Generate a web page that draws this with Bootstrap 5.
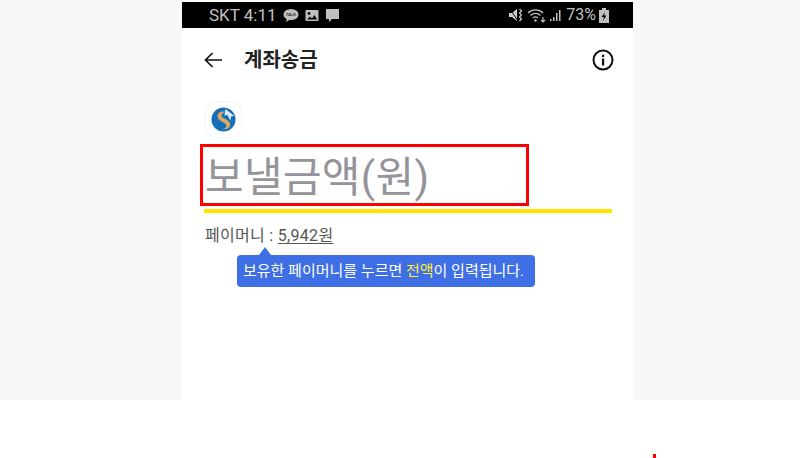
<!DOCTYPE html>
<html lang="ko">
<head>
    <meta charset="UTF-8">
    <meta name="viewport" content="width=device-width, initial-scale=1">
    <title>계좌송금</title>
    <link href="https://cdn.jsdelivr.net/npm/bootstrap@5.3.0/dist/css/bootstrap.min.css" rel="stylesheet">
    <style>
        html, body { height: 458px; overflow: hidden; }
        body { font-family: Roboto, "Noto Sans CJK KR", sans-serif; background: #fff; position: relative; }
        .stage { height: 400px; background: #f8f8f8; }
        .phone { width: 451px; margin-left: 182px; background: #fff; height: 400px; padding-top: 2px; }
        .status-bar { height: 26px; background: #000; color: #c0c0c0; font-size: 17px; line-height: 26px; padding: 0 24px 0 27px; }
        .status-left { gap: 6px; }
        .status-right { gap: 3px; }
        .battery-text { font-size: 16px; }
        .app-bar { height: 61px; padding: 2px 19px 0 22px; }
        .app-title { font-size: 20px; font-weight: 700; color: #222; margin-left: 22px; }
        .content-area { padding-left: 22px; padding-right: 21px; }
        .bank-logo { width: 37px; height: 37px; border: 1px solid #f4f4f4; border-radius: 12px; margin: 12px 0 0 1px; }
        .amount-box { width: 329px; height: 62px; border: 3px solid #f00; margin-left: -4px; margin-top: 6px; padding-left: 2px; overflow: hidden; }
        .amount-text { font-size: 42px; letter-spacing: .3px; line-height: 62px; color: #94949a; white-space: nowrap; }
        .amount-line { height: 4px; background: #ffe600; margin-top: 3px; }
        .pay-money { font-size: 16px; line-height: 20px; color: #555; margin: 13px 0 0 1px; letter-spacing: .3px; }
        .pay-money u { text-underline-offset: 2px; }
        .hint-bubble { width: 298px; height: 32px; background: #3f6fe4; color: #fff; font-size: 15px; line-height: 32px; border-radius: 4px; margin: 9px 0 0 33px; padding-left: 6px; position: relative; white-space: nowrap; }
        .hint-bubble::before { content: ""; position: absolute; left: 22px; top: -8px; border: 6px solid transparent; border-top: 0; border-bottom: 8px solid #3f6fe4; }
        .hint-key { color: #ffee33; }
        .talk-label { font-family: "Liberation Sans", sans-serif; font-size: 4px; font-weight: 700; fill: #333; }
        .red-dot { position: absolute; left: 653px; top: 454px; width: 3px; height: 4px; background: #f00; }
    </style>
</head>
<body>
    <div class="stage">
        <div class="phone">
            <div class="status-bar d-flex align-items-center justify-content-between">
                <div class="status-left d-flex align-items-center">
                    <span>SKT 4:11</span>
                    <svg width="16" height="15" viewBox="0 0 16 15"><ellipse cx="8" cy="6.500" rx="7.500" ry="5.500" fill="#c0c0c0"/><path d="M4 10l-1 4 5-3z" fill="#c0c0c0"/><text x="8" y="8" text-anchor="middle" class="talk-label">TALK</text></svg>
                    <svg width="14" height="13" viewBox="0 0 14 13"><rect x="0.500" y="1" width="13" height="11" rx="1" fill="#c0c0c0"/><circle cx="4" cy="4.500" r="1.400" fill="#000"/><path d="M2 10.500l3-3 2 2 2.500-3.500 2.500 4.500z" fill="#000"/></svg>
                    <svg width="15" height="15" viewBox="0 0 15 15"><path d="M1 1h13v10H7l-3 3v-3H1z" fill="#c0c0c0"/></svg>
                </div>
                <div class="status-right d-flex align-items-center">
                    <svg width="15" height="14" viewBox="0 0 15 14"><path d="M0 5h3L8 1v12L3 9H0z" fill="#d0d0d0"/><path d="M1 1l8 12" stroke="#000" stroke-width="1"/><path d="M10.500 1l2 2-2 2 2 2-2 2 2 2-2 2" fill="none" stroke="#c0c0c0" stroke-width="1.300"/></svg>
                    <svg width="19" height="15" viewBox="0 0 19 15"><g fill="none" stroke="#c0c0c0" stroke-width="1.200"><path d="M1 5a10.500 10.500 0 0 1 15 0"/><path d="M3.500 7.500a7 7 0 0 1 10 0"/><path d="M6 10a3.500 3.500 0 0 1 5 0"/><path d="M16 9v5M14 12l2 2 2-2"/></g><circle cx="8.500" cy="12.500" r="1.200" fill="#c0c0c0"/></svg>
                    <svg width="14" height="13" viewBox="0 0 14 13"><g fill="#c0c0c0"><rect x="1" y="10" width="1.500" height="2"/><rect x="4" y="8" width="1.500" height="4"/><rect x="7" y="4" width="1.500" height="8"/><rect x="10" y="1" width="1.500" height="11"/></g></svg>
                    <span class="battery-text">73%</span>
                    <svg width="10" height="15" viewBox="0 0 10 15"><path d="M3 0h4v2h3v13H0V2h3z" fill="#c0c0c0"/><path d="M6 4L2.500 9H5l-1 4 3.500-5.500H5z" fill="#000"/></svg>
                </div>
            </div>
            <div class="app-bar d-flex align-items-center justify-content-between">
                <div class="d-flex align-items-center">
                    <svg width="18" height="16" viewBox="0 0 18 16"><path d="M18 8H1.500M8.500 1l-7 7 7 7" fill="none" stroke="#111" stroke-width="1.700"/></svg>
                    <span class="app-title">계좌송금</span>
                </div>
                <svg width="22" height="22" viewBox="0 0 22 22"><circle cx="11" cy="11" r="9.500" fill="none" stroke="#111" stroke-width="2"/><rect x="10" y="9.500" width="2.200" height="7" fill="#111"/><rect x="10" y="5.700" width="2.200" height="2.300" fill="#111"/></svg>
            </div>
            <div class="content-area">
                <div class="bank-logo d-flex align-items-center justify-content-center">
                    <svg width="25" height="25" viewBox="0 0 26 26"><circle cx="13" cy="13" r="12.500" fill="#1570b8"/><path d="M15 2l9 7-3 1-1 4-3-6-3 1z" fill="#dcecf6"/><path d="M15 5c-6-1-9 2-8 6 1 4 8 5 9 8 .5 2-2 4-5 4 5 1 9-1 9-5 0-5-9-6-9-9 0-2 2-3 4-4z" fill="#d9a868"/></svg>
                </div>
                <div class="amount-box"><div class="amount-text">보낼금액(원)</div></div>
                <div class="amount-line"></div>
                <div class="pay-money">페이머니 : <u>5,942원</u></div>
                <div class="hint-bubble">보유한 페이머니를 누르면 <span class="hint-key">전액</span>이 입력됩니다.</div>
            </div>
        </div>
    </div>
    <div class="red-dot"></div>
    <script src="https://cdn.jsdelivr.net/npm/bootstrap@5.3.0/dist/js/bootstrap.bundle.min.js"></script>
</body>
</html>
